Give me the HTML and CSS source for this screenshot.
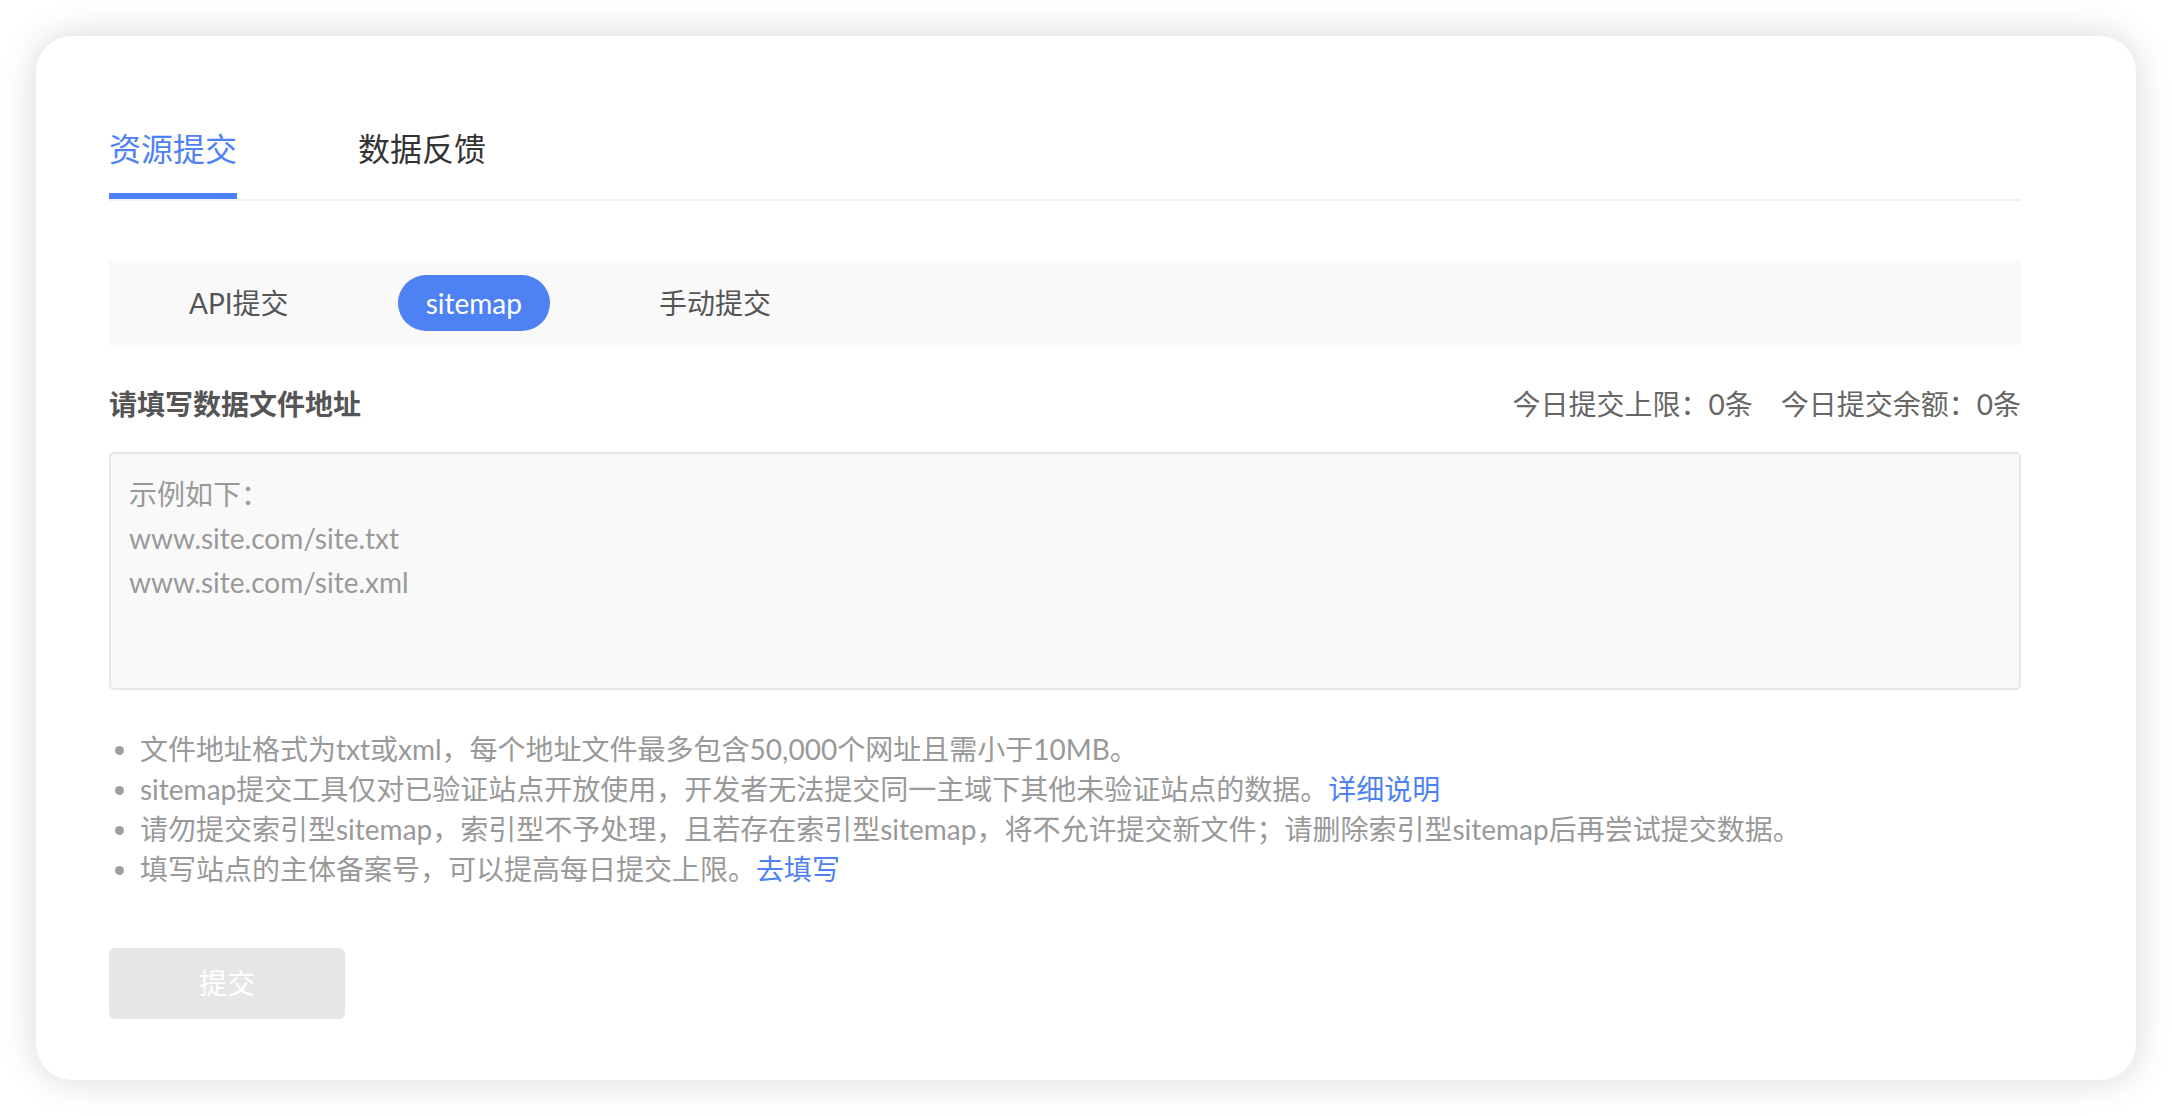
FILE: index.html
```html
<!DOCTYPE html>
<html lang="zh-CN">
<head>
<meta charset="utf-8">
<title>资源提交</title>
<link rel="stylesheet" href="styles.css">
</head>
<body>
<div class="card">
  <div class="tabs">
    <div class="tab active">资源提交</div>
    <div class="tab">数据反馈</div>
  </div>
  <div class="subtabs">
    <div class="subtab">API提交</div>
    <div class="subtab on">sitemap</div>
    <div class="subtab">手动提交</div>
  </div>
  <div class="row">
    <div class="label">请填写数据文件地址</div>
    <div class="quota"><span>今日提交上限：0条</span><span class="q2">今日提交余额：0条</span></div>
  </div>
  <div class="input">
    <div class="ph">示例如下：</div>
    <div class="ph">www.site.com/site.txt</div>
    <div class="ph">www.site.com/site.xml</div>
  </div>
  <ul class="notes">
    <li>文件地址格式为txt或xml，每个地址文件最多包含50,000个网址且需小于10MB。</li>
    <li>sitemap提交工具仅对已验证站点开放使用，开发者无法提交同一主域下其他未验证站点的数据。<a class="link">详细说明</a></li>
    <li>请勿提交索引型sitemap，索引型不予处理，且若存在索引型sitemap，将不允许提交新文件；请删除索引型sitemap后再尝试提交数据。</li>
    <li>填写站点的主体备案号，可以提高每日提交上限。<a class="link">去填写</a></li>
  </ul>
  <div class="btn">提交</div>
</div>
</body>
</html>
```

FILE: styles.css
```css
html, body {
  margin: 0;
  padding: 0;
  background: #ffffff;
}
body {
  padding: 36px;
  font-family: Lato, "Noto Sans CJK SC", sans-serif;
  font-size: 28px;
  color: #333;
}
.card {
  width: 2100px;
  box-sizing: border-box;
  background: #fff;
  border-radius: 36px;
  box-shadow: 0 0 36px rgba(0, 0, 0, 0.16);
  padding: 91px 115px 61px 73px;
}
.tabs {
  display: flex;
  gap: 121px;
  border-bottom: 2px solid #f0f0f0;
}
.tab {
  font-size: 32px;
  line-height: 44px;
  padding-bottom: 22px;
  border-bottom: 6px solid transparent;
  color: #333;
}
.tab.active {
  color: #4e82f4;
  border-bottom-color: #4e82f4;
}
.subtabs {
  margin-top: 60px;
  height: 84px;
  background: #f9f9f9;
  display: flex;
  align-items: center;
  gap: 81px;
  padding-left: 52px;
}
.subtab {
  height: 56px;
  line-height: 56px;
  padding: 0 28px;
  border-radius: 28px;
  color: #555;
}
.subtab.on {
  background: #4e82f4;
  color: #fff;
}
.row {
  margin-top: 39px;
  display: flex;
  justify-content: space-between;
  line-height: 40px;
}
.label {
  font-weight: bold;
  color: #555;
}
.quota {
  color: #666;
}
.q2 {
  margin-left: 28px;
}
.input {
  margin-top: 28px;
  height: 238px;
  box-sizing: border-box;
  border: 2px solid #e6e6e6;
  border-radius: 5px;
  background: #f9f9f9;
  padding: 18px 18px;
}
.ph {
  line-height: 44px;
  color: #999;
}
.notes {
  list-style: none;
  margin: 39px 0 0 0;
  padding: 0;
  color: #999;
}
.notes li {
  line-height: 40px;
  display: flex;
  align-items: center;
}
.notes li::before {
  content: "";
  width: 9px;
  height: 9px;
  border-radius: 50%;
  background: #a0a0a0;
  margin: 2px 16px 0 6px;
  flex: none;
}
.link {
  color: #4e82f4;
  text-decoration: none;
}
.btn {
  margin-top: 59px;
  width: 236px;
  height: 71px;
  line-height: 71px;
  text-align: center;
  background: #e6e6e6;
  color: #fff;
  border-radius: 6px;
}
```
